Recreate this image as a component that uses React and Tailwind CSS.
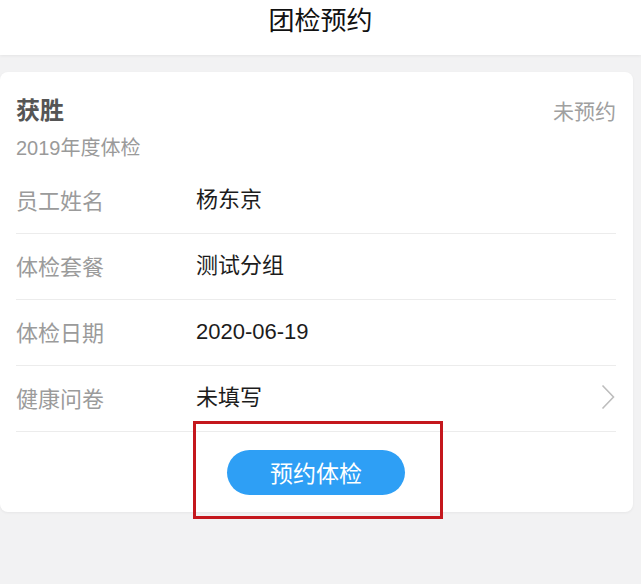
import React from "react";

const font = { fontFamily: '"Noto Sans CJK SC", "Liberation Sans", sans-serif' };

function Row({ label, value, arrow }) {
  return (
    <div className="flex h-[66px] items-center border-b border-[#ececec]">
      <div className="w-[180px] pb-[2px] text-[22px] text-[#9b9b9b]">{label}</div>
      <div className="flex-1 pb-[2px] text-[22px] text-[#1c1c1c] [font-family:'Liberation_Sans','Noto_Sans_CJK_SC',sans-serif]">{value}</div>
      {arrow && (
        <svg width="14" height="26" viewBox="0 0 14 26" className="mr-[1px] mb-[3px]">
          <path d="M1.5 1.5 L12.5 13 L1.5 24.5" fill="none" stroke="#bdbdbd" strokeWidth="1.6" />
        </svg>
      )}
    </div>
  );
}

export default function App() {
  return (
    <div className="relative min-h-[584px] w-full bg-[#f2f2f3]" style={font}>
      <div className="h-[55px] bg-white text-center text-[26px] leading-[38px] text-[#111] shadow-[0_1px_3px_rgba(0,0,0,0.06)]">
        团检预约
      </div>
      <div className="mt-[17px] mr-[8px] rounded-[8px] bg-white pl-[16px] pr-[17px] shadow-[0_1px_3px_rgba(0,0,0,0.05)]">
        <div className="flex h-[96px] justify-between pt-[22px]">
          <div>
            <div className="text-[24px] font-bold leading-[30px] text-[#555]">获胜</div>
            <div className="mt-[11px] text-[20px] leading-[26px] text-[#9a9a9a] [font-family:'Liberation_Sans','Noto_Sans_CJK_SC',sans-serif]">2019年度体检</div>
          </div>
          <div className="pt-[1px] text-[21px] leading-[30px] text-[#a0a0a0]">未预约</div>
        </div>
        <Row label="员工姓名" value="杨东京" />
        <Row label="体检套餐" value="测试分组" />
        <Row label="体检日期" value="2020-06-19" />
        <Row label="健康问卷" value="未填写" arrow />
        <div className="flex h-[80px] items-center justify-center">
          <button className="h-[45px] w-[178px] rounded-full bg-[#2e9ff5] text-[23px] text-white">
            预约体检
          </button>
        </div>
      </div>
      <div className="absolute left-[193px] top-[421px] h-[98px] w-[250px] border-[3px] border-[#c4171d]" />
    </div>
  );
}
